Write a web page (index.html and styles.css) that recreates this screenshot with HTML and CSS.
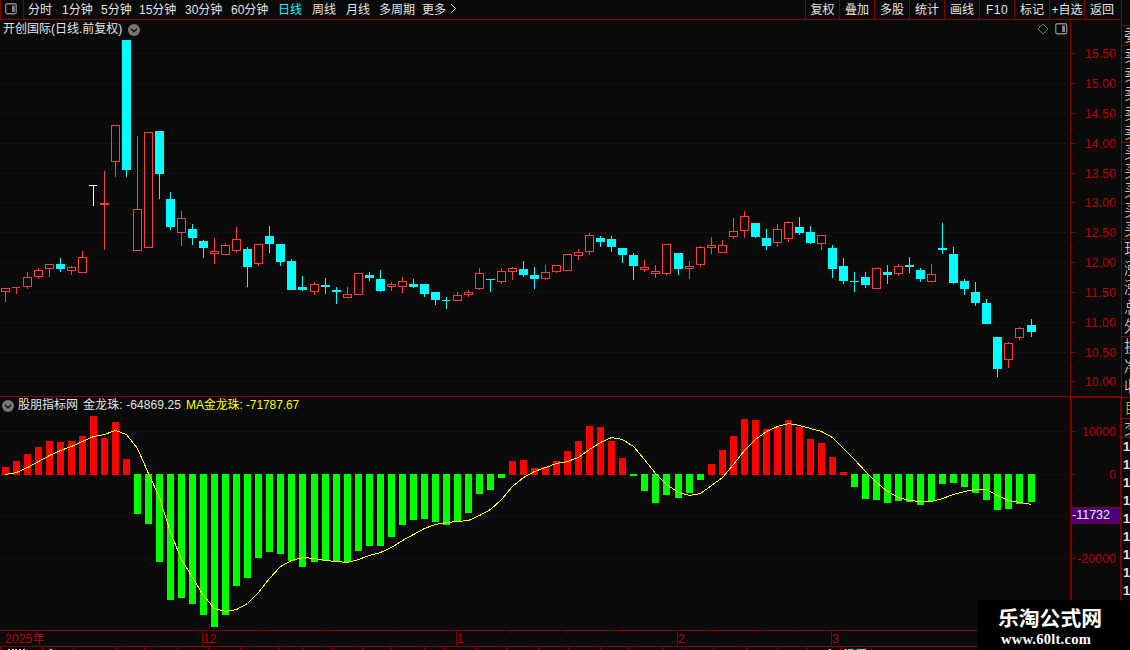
FILE: index.html
```html
<!DOCTYPE html>
<html lang="zh-CN">
<head>
<meta charset="utf-8">
<title>开创国际</title>
<link rel="stylesheet" href="styles.css">
</head>
<body>
<div class="app">
  <div class="workspace">
    <header class="toolbar">
      <div class="panel-toggle">
        <svg width="12" height="12" viewBox="0 0 12 12"><rect x="0.75" y="0.75" width="10.5" height="10" rx="1.5" fill="none" stroke="#858585" stroke-width="1.3"/><rect x="7" y="2.5" width="2.8" height="6.5" fill="#858585"/></svg>
      </div>
      <nav class="periods">
        <span class="w34">分时</span><span class="w39">1分钟</span><span class="w38">5分钟</span><span class="w46">15分钟</span><span class="w46">30分钟</span><span class="w47">60分钟</span><span class="w34 active">日线</span><span class="w34">周线</span><span class="w33">月线</span><span class="w43">多周期</span><span class="more">更多</span>
        <svg class="arrow" width="7" height="11" viewBox="0 0 7 11"><path d="M1 1L5.5 5.5L1 10" fill="none" stroke="#d8d8d8"/></svg>
      </nav>
      <nav class="actions">
        <span class="first">复权</span><span>叠加</span><span>多股</span><span>统计</span><span>画线</span><span class="latin">F10</span><span>标记</span><span>+自选</span><span class="last">返回</span>
      </nav>
    </header>
    <main class="charts">
      <svg id="chart" class="canvas" width="1121" height="630" viewBox="0 20 1121 630"></svg>
      <div class="title">
        <span>开创国际(日线.前复权)</span>
        <svg width="12" height="12" viewBox="0 0 12 12"><circle cx="6" cy="6" r="6" fill="#777"/><path d="M3 4.8L6 7.8L9 4.8" fill="none" stroke="#111" stroke-width="1.4"/></svg>
      </div>
      <div class="chart-tools">
        <svg width="12" height="12" viewBox="0 0 12 12"><path d="M6 1L11 6L6 11L1 6Z" fill="none" stroke="#777"/></svg>
        <svg width="13" height="12" viewBox="0 0 13 12"><rect x="0.75" y="0.75" width="11" height="10" rx="1.5" fill="none" stroke="#858585" stroke-width="1.3"/><rect x="7" y="2.5" width="3" height="6.5" fill="#858585"/></svg>
      </div>
      <div class="legend">
        <svg width="12" height="12" viewBox="0 0 12 12"><circle cx="6" cy="6" r="6" fill="#777"/><path d="M3 4.8L6 7.8L9 4.8" fill="none" stroke="#111" stroke-width="1.4"/></svg>
        <span class="source">股朋指标网</span><span class="value">金龙珠: -64869.25</span><span class="average">MA金龙珠: -71787.67</span>
      </div>
    </main>
  </div>
  <aside class="quote">
    <div class="group blank"></div>
    <div class="group single"><span>委比</span></div>
    <div class="group five"><span>卖五</span><span>卖四</span><span>卖三</span><span>卖二</span><span>卖一</span></div>
    <div class="group five"><span>买一</span><span>买二</span><span>买三</span><span>买四</span><span>买五</span></div>
    <div class="group five"><span>现价</span><span>涨跌</span><span>涨幅</span><span>总量</span><span>外盘</span></div>
    <div class="group three"><span>换手</span><span>净资</span><span>收益</span></div>
    <div class="group own"><span>自选</span></div>
    <div class="group trade"><span>交易</span></div>
    <div class="ticks"><span>1</span><span>1</span><span>1</span><span>1</span><span>1</span><span>1</span><span>1</span><span>1</span><span>1</span></div>
  </aside>
  <div class="brand"><strong>乐淘公式网</strong><span>www.60lt.com</span></div>
</div>
<script src="chart.js"></script>
</body>
</html>
```
FILE: styles.css
```css
* { box-sizing: border-box; }
body {
  margin: 0;
  background: #0a0a0a;
  color: #e4e4e4;
  font: 12px/18px "Liberation Sans", "Noto Sans CJK SC", sans-serif;
  white-space: nowrap;
}
svg { display: block; flex: none; }
.app { position: relative; display: flex; width: 1130px; height: 650px; overflow: hidden; }
.workspace { width: 1121px; flex: none; }
.toolbar { display: flex; height: 20px; border-bottom: 1px solid #800000; line-height: 20px; }
.panel-toggle { width: 24px; padding: 3px 0 0 4px; border: solid #800000; border-width: 0 1px; }
.periods { display: flex; flex: 1; padding-left: 4px; }
.periods span { flex: none; }
.w33 { width: 33px; }
.w34 { width: 34px; }
.w38 { width: 38px; }
.w39 { width: 39px; }
.w43 { width: 43px; }
.w46 { width: 46px; }
.w47 { width: 47px; }
.more { width: 28px; }
.arrow { margin-top: 3px; }
.active { color: #00ffff; }
.actions { display: flex; }
.actions span { width: 35px; height: 19px; border-left: 1px solid #800000; text-align: center; }
.actions .first { width: 34px; }
.actions .last { width: 37px; padding-right: 2px; }
.actions .latin { letter-spacing: 0.5px; }
.charts { position: relative; height: 630px; }
.title { position: absolute; left: 3px; top: 0; display: flex; align-items: center; gap: 6px; line-height: 19px; }
.chart-tools { position: absolute; left: 1037px; top: 3px; display: flex; gap: 6px; }
.legend { position: absolute; left: 2px; top: 376px; display: flex; align-items: center; line-height: 19px; }
.source { margin-left: 4px; width: 65px; }
.value { width: 103px; letter-spacing: 0.1px; }
.average { color: #ffff00; letter-spacing: -0.1px; }
.quote { width: 9px; height: 650px; overflow: hidden; border-left: 1px solid #800000; font-size: 16px; }
.group { display: flex; flex-direction: column; border-bottom: 1px solid #800000; padding-left: 2px; }
.group span { flex: 1; min-height: 0; line-height: 19px; font-weight: 300; }
.blank { height: 26px; }
.single { height: 20px; }
.five { height: 97px; }
.three { height: 61px; }
.own { height: 21px; color: #d8d800; }
.trade { height: 19px; }
.ticks { display: flex; flex-direction: column; padding-left: 1px; font: bold 13px/18px "Liberation Sans", sans-serif; }
.brand {
  position: absolute;
  left: 978px;
  top: 600px;
  width: 152px;
  height: 50px;
  padding: 7px 0 0 20px;
  background: #000;
  color: #fff;
}
.brand strong { display: block; font-size: 20.8px; line-height: 24px; }
.brand span { display: block; padding-left: 3px; font: bold 14.5px/16px "Liberation Serif", serif; letter-spacing: 0.25px; }
.axis { fill: #c00000; font-size: 12px; letter-spacing: 0.2px; }
.cursor { fill: #eee; font-size: 12.5px; }
```
FILE: chart.js
```javascript
const chart = document.getElementById('chart');
const NS = 'http://www.w3.org/2000/svg';
const RED = '#ff3c3c', CYAN = '#00ffff', FRAME = '#800000';

function add(tag, attrs, text) {
  const el = document.createElementNS(NS, tag);
  for (const key in attrs) el.setAttribute(key, attrs[key]);
  if (text !== undefined) el.textContent = text;
  chart.appendChild(el);
}
function rect(x, y, width, height, fill) {
  add('rect', { x, y, width, height, fill, 'shape-rendering': 'crispEdges' });
}
const center = k => 5 + 11 * k + (k >= 28) + (k >= 61) + (k >= 93);

// Dotted grid
const priceRows = [53, 83, 113, 143, 173, 202, 232, 262, 292, 322, 352, 381];
const valueRows = [431, 474, 516, 558];
for (const y of [...priceRows, ...valueRows]) {
  add('line', { x1: 1, x2: 1067, y1: y + 0.5, y2: y + 0.5, stroke: '#780000', 'stroke-dasharray': '1 3', 'shape-rendering': 'crispEdges' });
}

// Candles: type, high, body top, body bottom, low
const candles = `r 288 288 292 302|t 287 287 288 294|r 272 277 287 289|r 268 270 277 279|r 264 264 269 277|c 258 264 269 272|r 266 267 271 275|r 251 257 273 273|w 185 185 186 206|r 171 203 205 250|r 125 125 162 177|c 40 40 170 177|r 136 209 251 251|r 132 132 248 248|c 131 131 174 199|c 192 199 227 230|r 211 218 233 246|c 224 229 238 245|c 240 241 248 258|r 238 251 254 264|r 243 245 255 255|r 227 239 251 253|c 247 249 267 287|r 244 244 264 266|c 226 236 244 253|c 244 244 262 266|c 259 261 290 290|c 276 287 290 291|r 282 284 292 295|c 278 285 287 294|c 287 290 292 304|r 287 294 298 298|r 273 273 295 295|c 272 275 278 281|c 270 279 291 292|r 282 284 287 291|r 277 281 287 293|c 279 284 287 288|c 284 284 294 297|c 292 292 300 305|u 297 300 301 309|r 292 295 301 301|r 290 292 295 297|r 268 273 289 290|c 279 279 280 292|r 268 271 282 284|r 267 268 272 280|c 261 269 275 277|c 267 275 279 289|r 265 272 279 280|r 265 265 272 273|r 254 254 271 271|r 249 252 256 260|r 233 235 252 255|c 236 238 242 247|c 236 239 247 252|c 248 248 255 263|c 253 255 266 280|r 260 267 270 272|r 265 271 274 278|r 244 244 274 275|c 253 253 269 275|r 261 266 269 279|r 246 247 265 267|r 237 245 248 254|r 240 245 253 253|r 218 231 237 239|r 211 216 231 238|c 223 223 237 238|c 229 238 246 250|r 224 229 243 247|r 221 222 239 242|c 217 227 233 235|c 226 232 243 244|r 235 235 244 250|c 245 248 269 278|c 258 266 281 284|c 272 281 282 292|c 272 277 285 288|r 268 268 289 289|c 265 272 275 284|r 264 266 274 276|c 257 265 267 273|c 268 270 279 282|r 264 274 282 282|c 223 248 250 254|c 247 254 283 284|c 279 281 289 295|c 282 292 303 306|c 299 303 324 324|c 337 337 369 377|r 342 343 360 368|r 327 328 338 340|c 319 325 332 337`;
candles.split('|').forEach((row, k) => {
  const parts = row.split(' ');
  const type = parts[0];
  const [high, top, bottom, low] = parts.slice(1).map(Number);
  const x = center(k);
  const color = type === 'w' ? '#ffffff' : type === 'c' || type === 'u' ? CYAN : RED;
  if (top > high) rect(x, high, 1, top - high, color);
  if (low > bottom) rect(x, bottom, 1, low - bottom, color);
  if (type === 'r' && bottom - top > 2) {
    add('rect', { x: x - 3.5, y: top + 0.5, width: 8, height: bottom - top - 1, fill: 'none', stroke: color, 'shape-rendering': 'crispEdges' });
  } else {
    rect(x - 4, top, 'wtu'.includes(type) ? 8 : 9, bottom - top, color);
  }
});

// Histogram around the zero row
const bars = [467,461,454,447,441,442,441,436,416,438,422,459,514,524,562,600,598,604,615,627,615,586,578,558,552,554,561,567,562,561,561,562,551,546,546,537,525,520,519,522,525,521,513,494,490,478,461,460,468,467,461,451,441,426,427,441,458,476,491,503,495,498,493,480,464,450,436,419,420,429,427,420,427,439,443,457,472,487,499,500,503,501,502,505,501,484,483,487,493,500,510,509,504,502];
bars.forEach((y, k) => {
  if (y < 474) rect(center(k) - 3, y, 7, 475 - y, '#ff0000');
  else rect(center(k) - 3, 474, 7, y - 474, '#00ff00');
});
const average = [474,472,467,461,455,450,446,441,436,434,430,434,448,473,497,532,559,577,595,608,611,609,603,592,578,566,560,557,558,560,561,562,559,555,552,547,540,534,528,524,522,521,520,515,509,499,486,477,471,467,463,461,457,449,442,437,439,446,459,473,484,492,495,493,485,477,464,450,439,431,426,423,425,428,431,437,448,459,471,482,491,497,500,501,501,498,494,491,489,489,495,500,502,504];
add('polyline', {
  points: average.map((y, k) => `${center(k) + 0.5},${y + 0.5}`).join(' '),
  fill: 'none', stroke: '#ffff00', 'stroke-width': 1, 'shape-rendering': 'crispEdges'
});

// Frame
rect(1070, 20, 1, 377, FRAME);
rect(0, 396, 1070, 1, FRAME);
rect(1070, 396, 51, 2, FRAME);
rect(1070, 396, 2, 235, FRAME);
rect(1120, 396, 1, 235, FRAME);
rect(0, 630, 1121, 1, FRAME);
rect(0, 646, 1121, 1, FRAME);

// Vertical scales
priceRows.forEach((y, i) => {
  rect(1071, y, 5, 1, FRAME);
  if (i < 11) rect(1071, y + 15, 2, 1, FRAME);
  add('text', { x: 1116, y: y + 5, class: 'axis', 'text-anchor': 'end', textLength: 31 }, (15.5 - i * 0.5).toFixed(2));
});
[['10000', 431, 34], ['0', 474, 7], ['', 516, 0], ['-20000', 558, 39]].forEach(([label, y, w]) => {
  rect(1072, y, 4, 1, FRAME);
  if (y < 558) rect(1072, y + 21, 1, 1, FRAME);
  if (label) add('text', { x: 1116, y: y + 5, class: 'axis', 'text-anchor': 'end', textLength: w }, label);
});
rect(1072, 507, 48, 17, '#480080');
rect(1072, 507, 48, 1, FRAME);
rect(1072, 523, 48, 1, FRAME);
add('text', { x: 1072, y: 519, class: 'cursor', textLength: 38 }, '-11732');

// Time scale
[202, 456, 677, 831].forEach((x, i) => {
  rect(x, 631, 1, 15, FRAME);
  add('text', { x: x + 1, y: 643, class: 'axis' }, ['12', '1', '2', '3'][i]);
});
add('text', { x: 5, y: 643, class: 'axis' }, '2025年');
for (const x of [266, 330, 393, 511, 567, 622, 716, 754, 793]) rect(x, 631, 1, 2, FRAME);
for (const x of [0, 42, 73, 116, 144, 177, 208, 240, 278, 303, 332, 362, 390, 424, 444, 476, 506, 538, 568, 600, 628, 663, 685, 713, 746, 777, 807, 840, 871]) rect(x, 647, 1, 3, FRAME);

// Tops of the next row of labels
for (const x of [8, 12, 15, 19, 23, 50, 829, 845]) rect(x, 649, 2, 1, '#ddd');
rect(848, 649, 5, 1, CYAN);
rect(857, 649, 9, 1, CYAN);
```
